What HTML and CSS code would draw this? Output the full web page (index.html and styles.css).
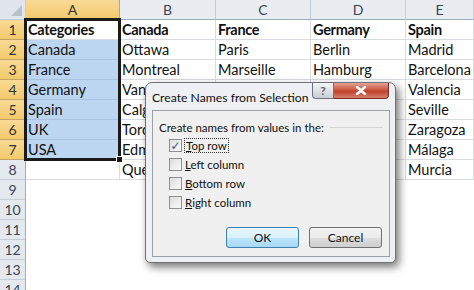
FILE: index.html
```html
<!DOCTYPE html>
<html lang="en">

<head>
    <meta charset="UTF-8">
    <title>Create Names from Selection</title>
    <link rel="stylesheet" href="styles.css">
</head>

<body>

    <div class="hoja">
        <div class="cab esquina"><span class="triangulo"></span></div>
        <div class="cab col activa">A</div>
        <div class="cab col">B</div>
        <div class="cab col">C</div>
        <div class="cab col">D</div>
        <div class="cab col">E</div>

        <div class="cab fila activa">1</div>
        <div class="celda negrita">Categories</div>
        <div class="celda negrita">Canada</div>
        <div class="celda negrita">France</div>
        <div class="celda negrita">Germany</div>
        <div class="celda negrita">Spain</div>

        <div class="cab fila activa">2</div>
        <div class="celda sel">Canada</div>
        <div class="celda">Ottawa</div>
        <div class="celda">Paris</div>
        <div class="celda">Berlin</div>
        <div class="celda">Madrid</div>

        <div class="cab fila activa">3</div>
        <div class="celda sel">France</div>
        <div class="celda">Montreal</div>
        <div class="celda">Marseille</div>
        <div class="celda">Hamburg</div>
        <div class="celda">Barcelona</div>

        <div class="cab fila activa">4</div>
        <div class="celda sel">Germany</div>
        <div class="celda">Vancouver</div>
        <div class="celda">Lyon</div>
        <div class="celda">Munich</div>
        <div class="celda">Valencia</div>

        <div class="cab fila activa">5</div>
        <div class="celda sel">Spain</div>
        <div class="celda">Calgary</div>
        <div class="celda">Toulouse</div>
        <div class="celda">Cologne</div>
        <div class="celda">Seville</div>

        <div class="cab fila activa">6</div>
        <div class="celda sel">UK</div>
        <div class="celda">Toronto</div>
        <div class="celda">Nice</div>
        <div class="celda">Frankfurt</div>
        <div class="celda">Zaragoza</div>

        <div class="cab fila activa">7</div>
        <div class="celda sel">USA</div>
        <div class="celda">Edmonton</div>
        <div class="celda">Nantes</div>
        <div class="celda">Stuttgart</div>
        <div class="celda">Málaga</div>

        <div class="cab fila">8</div>
        <div class="celda"></div>
        <div class="celda">Quebec</div>
        <div class="celda">Lille</div>
        <div class="celda">Dortmund</div>
        <div class="celda">Murcia</div>

        <div class="cab fila">9</div>
        <div class="vacia"></div><div class="vacia"></div><div class="vacia"></div><div class="vacia"></div><div class="vacia"></div>
        <div class="cab fila">10</div>
        <div class="vacia"></div><div class="vacia"></div><div class="vacia"></div><div class="vacia"></div><div class="vacia"></div>
        <div class="cab fila">11</div>
        <div class="vacia"></div><div class="vacia"></div><div class="vacia"></div><div class="vacia"></div><div class="vacia"></div>
        <div class="cab fila">12</div>
        <div class="vacia"></div><div class="vacia"></div><div class="vacia"></div><div class="vacia"></div><div class="vacia"></div>
        <div class="cab fila">13</div>
        <div class="vacia"></div><div class="vacia"></div><div class="vacia"></div><div class="vacia"></div><div class="vacia"></div>
        <div class="cab fila">14</div>
        <div class="vacia"></div><div class="vacia"></div><div class="vacia"></div><div class="vacia"></div><div class="vacia"></div>

        <div class="seleccion"><span class="tirador"></span></div>
    </div>

    <div class="dialogo">
        <div class="titulo">
            <span class="texto-titulo">Create Names from Selection</span>
            <div class="botones-ventana">
                <span class="boton-ayuda">?</span>
                <span class="boton-cerrar">
                    <svg width="12" height="9" viewBox="0 0 12 9">
                        <path d="M2 1 L10 8 M10 1 L2 8" stroke="#fff" stroke-width="2.6" stroke-linecap="round"/>
                    </svg>
                </span>
            </div>
        </div>
        <div class="panel">
            <div class="grupo">
                <span>Create names from values in the:</span>
                <span class="linea"></span>
            </div>
            <div class="opciones">
                <label class="opcion"><span class="casilla marcada">&#10003;</span><span class="foco"><u>T</u>op row</span></label>
                <label class="opcion"><span class="casilla"></span><span><u>L</u>eft column</span></label>
                <label class="opcion"><span class="casilla"></span><span><u>B</u>ottom row</span></label>
                <label class="opcion"><span class="casilla"></span><span><u>R</u>ight column</span></label>
            </div>
            <div class="acciones">
                <button class="boton-dialogo por-defecto">OK</button>
                <button class="boton-dialogo">Cancel</button>
            </div>
        </div>
    </div>

</body>

</html>
```

FILE: styles.css
```css
body {
    margin: 0;
    width: 474px;
    height: 290px;
    overflow: hidden;
    background-color: #fff;
    font-family: Lato, "Liberation Sans", sans-serif;
}

.hoja {
    position: relative;
    display: grid;
    grid-template-columns: 26px 94px 96px 95px 95px 68px;
    grid-auto-rows: 20px;
}

.cab {
    box-sizing: border-box;
    display: flex;
    align-items: center;
    justify-content: center;
    font-size: 14px;
    color: #3a4452;
    background-color: #e9edf2;
    border-right: 1px solid #c5cdd8;
    border-bottom: 1px solid #c5cdd8;
}

.cab.fila {
    background-color: #e4e9ef;
    border-right-color: #9eabbd;
}

.cab.col {
    border-bottom-color: #9eabbd;
}

.cab.activa {
    background: linear-gradient(#f9da96, #f3c96a);
    border-right-color: #c2a566;
    border-bottom-color: #c2a566;
    color: #333;
}

.esquina {
    position: relative;
    background-color: #e1e6ec;
}

.triangulo {
    position: absolute;
    right: 3px;
    bottom: 3px;
    width: 0;
    height: 0;
    border-left: 11px solid transparent;
    border-bottom: 11px solid #b9c1cc;
}

.celda,
.vacia {
    box-sizing: border-box;
    border-right: 1px solid #d8dbe0;
    border-bottom: 1px solid #d8dbe0;
    font-size: 14.5px;
    line-height: 19px;
    padding-left: 2px;
    white-space: nowrap;
    color: #111;
}

.vacia {
    border-bottom: none;
    border-right: none;
}

.negrita {
    font-weight: bold;
    letter-spacing: -0.3px;
}

.celda.sel {
    background-color: #bcd5f1;
    border-right-color: #a9c3e0;
    border-bottom-color: #a9c3e0;
}

.seleccion {
    position: absolute;
    left: 24px;
    top: 18px;
    width: 97px;
    height: 143px;
    box-sizing: border-box;
    border: 3px solid #1a1a1a;
    pointer-events: none;
}

.tirador {
    position: absolute;
    right: -5px;
    bottom: -5px;
    width: 5px;
    height: 5px;
    background-color: #1a1a1a;
    border: 1px solid #fff;
}

/* ventana de dialogo */
.dialogo {
    position: absolute;
    left: 145px;
    top: 82px;
    width: 251px;
    height: 181px;
    box-sizing: border-box;
    padding: 0 5px 5px 6px;
    display: flex;
    flex-direction: column;
    background-color: #eef0f3;
    border: 1px solid #6f7378;
    border-radius: 7px 7px 5px 5px;
    box-shadow: 3px 4px 9px rgba(0, 0, 0, 0.55);
    font-family: Lato, "Liberation Sans", sans-serif;
    color: #111;
}

.titulo {
    height: 27px;
    display: flex;
    justify-content: space-between;
    align-items: flex-start;
}

.texto-titulo {
    font-size: 12.2px;
    margin-top: 7px;
    white-space: nowrap;
}

.botones-ventana {
    display: flex;
    flex-shrink: 0;
    margin-right: 1px;
}

.boton-ayuda,
.boton-cerrar {
    height: 16px;
    box-sizing: border-box;
    display: flex;
    align-items: center;
    justify-content: center;
    border: 1px solid #6d7480;
    border-top: none;
}

.boton-ayuda {
    width: 22px;
    border-radius: 0 0 0 4px;
    background: linear-gradient(#f4f5f7, #c9ced6);
    color: #5a6170;
    font-size: 12px;
    font-weight: bold;
}

.boton-cerrar {
    width: 55px;
    border-left: none;
    border-color: #7b2a22;
    border-radius: 0 0 4px 0;
    background: linear-gradient(#e3a394 0%, #cd5842 45%, #c1402b 55%, #d8806c 100%);
}

.panel {
    flex: 1;
    box-sizing: border-box;
    background-color: #f0f0f0;
    border: 1px solid #9aa0a8;
    padding: 8px 6px 8px 6px;
    display: flex;
    flex-direction: column;
    font-size: 11.5px;
}

.grupo {
    display: flex;
    align-items: center;
    gap: 6px;
    height: 16px;
    white-space: nowrap;
}

.linea {
    flex: 1;
    border-top: 1px solid #d5d5d5;
    margin-top: 1px;
}

.opciones {
    display: flex;
    flex-direction: column;
    gap: 6px;
    margin-top: 4px;
    padding-left: 10px;
}

.opcion {
    display: flex;
    align-items: center;
    gap: 3px;
    height: 13px;
}

.casilla {
    width: 13px;
    height: 13px;
    box-sizing: border-box;
    border: 1px solid #8e8f8f;
    background: linear-gradient(135deg, #dcdcdc, #fbfbfb);
    display: flex;
    align-items: center;
    justify-content: center;
    font-size: 12px;
    line-height: 1;
    color: #3c4f8a;
    font-family: "DejaVu Sans", sans-serif;
}

.foco {
    outline: 1px dotted #333;
    outline-offset: 0;
    padding: 0 1px;
}

.acciones {
    margin-top: auto;
    display: flex;
    justify-content: flex-end;
    gap: 10px;
    padding-right: 1px;
}

.boton-dialogo {
    width: 73px;
    height: 21px;
    padding: 0;
    font-family: Lato, "Liberation Sans", sans-serif;
    font-size: 12px;
    color: #111;
    border: 1px solid #707070;
    border-radius: 3px;
    background: linear-gradient(#f2f2f2 0%, #ebebeb 50%, #dddddd 51%, #cfcfcf 100%);
}

.boton-dialogo.por-defecto {
    border-color: #3c7fb1;
    background: linear-gradient(#eaf6fd 0%, #d9f0fc 50%, #bee6fd 51%, #a7d9f5 100%);
}
```
